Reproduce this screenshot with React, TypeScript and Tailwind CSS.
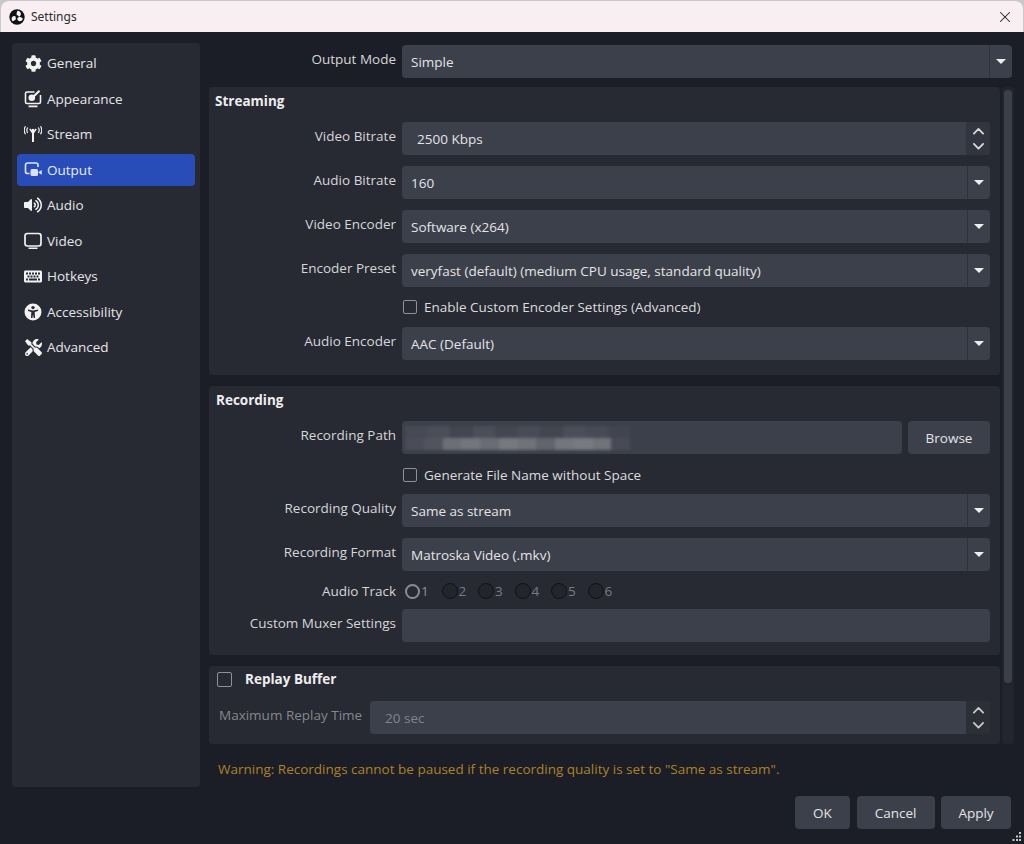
import React from 'react';
import { FaCog, FaKeyboard, FaTools, FaVolumeUp } from 'react-icons/fa';
import { X, ChevronUp, ChevronDown } from 'lucide-react';

const ObsLogo = () => (
  <svg width="16" height="16" viewBox="0 0 16 16">
    <circle cx="8" cy="8" r="7.700" fill="#121212" />
    <g fill="#f5f5f5">
      <path d="M8.600 1.800c2 .2 3.300 1.600 3.300 3.200 0 1.400-1 2.300-2.200 2.500-.3-.8-1-1.300-1.900-1.300-.5-2 .2-3.400.8-4.400Z" />
      <path d="M13.900 10c-.8 1.800-2.600 2.700-4 2.100-1.300-.5-1.800-1.800-1.500-3 .9-.1 1.500-.7 1.800-1.500 1.800.4 3 1.300 3.700 2.400Z" />
      <path d="M3.500 12.300c-1.200-1.600-1.200-3.500-.1-4.500 1-1 2.400-.9 3.400-.1-.4.800-.3 1.600.2 2.300-1.200 1.400-2.400 2-3.500 2.300Z" />
    </g>
  </svg>
);

const AppearanceIcon = () => (
  <svg width="18" height="18" viewBox="0 0 18 18" fill="none" stroke="#f2f2f2" strokeWidth="1.600">
    <path d="M10.500 2H3A1.500 1.500 0 0 0 1.500 3.500v8.500A1.500 1.500 0 0 0 3 13.500h12a1.500 1.500 0 0 0 1.500-1.500V5" />
    <circle cx="7.800" cy="7.800" r="3.300" fill="#f2f2f2" stroke="none" />
    <path d="M9 7 15.500 .8" strokeWidth="2.200" />
    <path d="M4.500 16.300h9" strokeWidth="1.800" />
  </svg>
);

const StreamIcon = () => (
  <svg width="18" height="18" viewBox="0 0 18 18" fill="none" stroke="#f2f2f2" strokeWidth="1.200">
    <circle cx="9" cy="5.500" r="1.700" fill="#f2f2f2" stroke="none" />
    <path d="M9 5.500v11.500" strokeWidth="2" />
    <path d="M5.800 3.800 9 8.500l3.200-4.700" strokeWidth="1.500" />
    <path d="M3.700 2.500a5 5 0 0 0 0 5.500M1.500 1.300a7.500 7.500 0 0 0 0 8M14.300 2.500a5 5 0 0 1 0 5.500M16.500 1.300a7.500 7.500 0 0 1 0 8" />
  </svg>
);

const OutputIcon = () => (
  <svg width="18" height="18" viewBox="0 0 18 18" fill="none">
    <path d="M5.500 12.500H3.500A2 2 0 0 1 1.500 10.500V4A2 2 0 0 1 3.500 2h8.500A2 2 0 0 1 14 4v2" stroke="#dbe2f6" strokeWidth="1.700" />
    <rect x="6.500" y="8" width="7.500" height="7" rx="1.500" fill="#dbe2f6" />
    <path d="M14.500 11 17.800 9v4.800l-3.300-2Z" fill="#dbe2f6" />
  </svg>
);

const VideoIcon = () => (
  <svg width="18" height="18" viewBox="0 0 18 18" fill="none" stroke="#f2f2f2">
    <rect x="1" y="1.500" width="16" height="12.500" rx="2.400" strokeWidth="1.700" />
    <path d="M4.500 16.300h9" strokeWidth="1.500" />
  </svg>
);

const AccessIcon = () => (
  <svg width="18" height="18" viewBox="0 0 18 18">
    <circle cx="9" cy="9" r="8.500" fill="#f2f2f2" />
    <circle cx="9" cy="4.600" r="1.700" fill="#272a33" />
    <path d="M3.800 6.600 9 7.600l5.200-1-.3 1.400-3.200.9.300 6.100H9.600L9 11.600l-.6 3.400H7.000l.3-6.100L4.100 8Z" fill="#272a33" />
  </svg>
);

const navItems = [
  { label: 'General', icon: <FaCog size={17} color="#f2f2f2" /> },
  { label: 'Appearance', icon: <AppearanceIcon /> },
  { label: 'Stream', icon: <StreamIcon /> },
  { label: 'Output', icon: <OutputIcon />, active: true },
  { label: 'Audio', icon: <FaVolumeUp size={18} color="#f2f2f2" /> },
  { label: 'Video', icon: <VideoIcon /> },
  { label: 'Hotkeys', icon: <FaKeyboard size={19} color="#f2f2f2" /> },
  { label: 'Accessibility', icon: <AccessIcon /> },
  { label: 'Advanced', icon: <FaTools size={17} color="#f2f2f2" /> },
];

const Caret = () => (
  <span className="flex h-full w-[23px] shrink-0 items-center justify-center border-l border-[#2f323b]">
    <span className="h-0 w-0 border-x-[5px] border-t-[5px] border-x-transparent border-t-[#eeeeee]" />
  </span>
);

const Combo = ({ value }: { value: string }) => (
  <div className="flex h-[33px] flex-1 items-center justify-between rounded bg-[#3c404b] pl-[9px] text-[#e4e4e6]">
    <span>{value}</span>
    <Caret />
  </div>
);

const Spin = ({ value, disabled }: { value: string; disabled?: boolean }) => (
  <div className={`flex h-[33px] flex-1 items-center justify-between rounded bg-[#3c404b] pl-[15px] ${disabled ? 'text-[#82848b]' : 'text-[#e4e4e6]'}`}>
    <span>{value}</span>
    <span className={`flex h-full w-[24px] flex-col items-center justify-center rounded-r ${disabled ? 'bg-[#2c2f38] text-[#c8c8c8]' : 'bg-[#32353f] text-[#d8d8d8]'}`}>
      <ChevronUp size={19} strokeWidth={2.400} className="-mb-[2px]" />
      <ChevronDown size={19} strokeWidth={2.400} className="-mt-[2px]" />
    </span>
  </div>
);

const Row = ({ label, children }: { label: string; children: React.ReactNode }) => (
  <div className="flex h-[33px] items-center">
    <span className="-mt-[5px] w-[187px] shrink-0 text-right text-[#d6d6d8]">{label}</span>
    <div className="ml-[6px] flex h-full flex-1 items-center">{children}</div>
  </div>
);

const Check = ({ label }: { label: string }) => (
  <div className="flex h-[20px] items-center pl-[193px] text-[#dcdcde]">
    <span className="ml-[1px] h-[14px] w-[14px] rounded-[2px] border border-[#8f9198]" />
    <span className="ml-[7px]">{label}</span>
  </div>
);

const Track = ({ n, on }: { n: number; on?: boolean }) => (
  <span className="flex w-[36.500px] items-center">
    <span className={`rounded-full ${on ? 'h-[15px] w-[15px] border-2 border-[#8a8c92]' : 'h-[16px] w-[16px] border border-[#101218] bg-[#22252c]'}`} />
    <span className={`ml-[1px] ${on ? 'text-[#8f9197]' : 'text-[#797b82]'}`}>{n}</span>
  </span>
);

const blurTop = ['#474a55', '#4b4e59', '#434650', '#4c4f5a', '#444751', '#494c57', '#434650', '#4b4e59', '#484b55', '#424550'];
const blurBottom = ['#4a4d57', '#51535d', '#6d6f78', '#74767e', '#6a6c75', '#777980', '#70727a', '#62646d', '#74767e', '#787a82', '#71737b', '#484b55'];

const BlurStrip = ({ colors }: { colors: string[] }) => (
  <div className="flex h-[12px] w-[225px]">
    {colors.map((c, i) => (
      <span key={i} className="flex-1" style={{ backgroundColor: c }} />
    ))}
  </div>
);

const App = () => (
  <div className="relative h-[844px] w-[1024px] overflow-hidden bg-[#c9c9c9] text-[13.500px] leading-[20px] font-['Open_Sans',sans-serif]">
    <div className="flex h-full flex-col overflow-hidden rounded-t-lg border-t border-[#c8c6c8]">
      <header className="mx-[1px] flex h-[31px] shrink-0 items-center justify-between rounded-t-lg bg-[#f9eff3] pl-[8px] pr-[9px] text-[12px] text-[#2c2c2c]">
        <div className="flex items-center gap-[6px]">
          <ObsLogo />
          <span className="font-['Noto_Sans',sans-serif]">Settings</span>
        </div>
        <X size={18} strokeWidth={1.400} color="#222222" />
      </header>

      <main className="flex flex-1 gap-[9px] bg-[#1b1e26] pl-[12px] pr-[12px] pt-[11px]">
        <nav className="flex h-[744px] w-[188px] shrink-0 flex-col rounded bg-[#272a33] px-[5px] pt-[4px]">
          {navItems.map((item) => (
            <div
              key={item.label}
              className={`flex h-[32px] shrink-0 items-center rounded pl-[7px] ${item.active ? 'bg-[#284cb8] text-[#e8ecf8]' : 'text-[#e6e6e8]'} [&:not(:first-child)]:mt-[3.500px]`}
            >
              <span className="flex w-[18px] justify-center">{item.icon}</span>
              <span className="ml-[5px]">{item.label}</span>
            </div>
          ))}
        </nav>

        <section className="flex min-w-0 flex-1 flex-col">
          <div className="mb-[9px] mt-[2px] flex h-[33px] items-center">
            <span className="-mt-[5px] w-[187px] shrink-0 text-right text-[#d6d6d8]">Output Mode</span>
            <div className="ml-[6px] flex h-full flex-1">
              <Combo value="Simple" />
            </div>
          </div>

          <div className="flex gap-[2px]">
            <div className="flex w-[791px] shrink-0 flex-col gap-[11px]">
              <div className="h-[288px] rounded bg-[#272a33] pr-[10px] pt-[4px]">
                <h2 className="pl-[6px] font-bold text-[#eeeeee]">Streaming</h2>
                <div className="mt-[11px] flex flex-col gap-[11px]">
                  <Row label="Video Bitrate"><Spin value="2500 Kbps" /></Row>
                  <Row label="Audio Bitrate"><Combo value="160" /></Row>
                  <Row label="Video Encoder"><Combo value="Software (x264)" /></Row>
                  <Row label="Encoder Preset"><Combo value="veryfast (default) (medium CPU usage, standard quality)" /></Row>
                </div>
                <div className="mt-[10px]"><Check label="Enable Custom Encoder Settings (Advanced)" /></div>
                <div className="mt-[10px]"><Row label="Audio Encoder"><Combo value="AAC (Default)" /></Row></div>
              </div>

              <div className="h-[269px] rounded bg-[#272a33] pr-[10px] pt-[4px]">
                <h2 className="pl-[7px] font-bold text-[#eeeeee]">Recording</h2>
                <div className="mt-[11px]">
                  <Row label="Recording Path">
                    <div className="flex h-[33px] flex-1 flex-col justify-center overflow-hidden rounded bg-[#3c404b] pl-[3px]">
                      <div className="blur-[1.500px]">
                        <BlurStrip colors={blurTop} />
                        <BlurStrip colors={blurBottom} />
                      </div>
                    </div>
                    <div className="ml-[6px] flex h-[33px] w-[82px] items-center justify-center rounded bg-[#3c404b] text-[#e4e4e6]">Browse</div>
                  </Row>
                </div>
                <div className="mt-[11px]"><Check label="Generate File Name without Space" /></div>
                <div className="mt-[9px] flex flex-col gap-[11px]">
                  <Row label="Recording Quality"><Combo value="Same as stream" /></Row>
                  <Row label="Recording Format"><Combo value="Matroska Video (.mkv)" /></Row>
                </div>
                <div className="mt-[10px] flex h-[20px] items-center">
                  <span className="w-[187px] shrink-0 text-right text-[#d6d6d8]">Audio Track</span>
                  <div className="ml-[9px] flex">
                    <Track n={1} on />
                    {[2, 3, 4, 5, 6].map((n) => <Track key={n} n={n} />)}
                  </div>
                </div>
                <div className="mt-[8px]">
                  <Row label="Custom Muxer Settings"><div className="h-[33px] flex-1 rounded bg-[#3c404b]" /></Row>
                </div>
              </div>

              <div className="h-[78px] rounded bg-[#272a33] pr-[10px] pt-[3px]">
                <div className="flex h-[20px] items-center pl-[8px]">
                  <span className="h-[15px] w-[15px] rounded-[2px] border border-[#8f9198]" />
                  <span className="ml-[13px] font-bold text-[#eeeeee]">Replay Buffer</span>
                </div>
                <div className="mt-[12px] flex h-[33px] items-center pl-[10px]">
                  <span className="-mt-[5px] w-[144px] shrink-0 whitespace-nowrap text-[#85878d]">Maximum Replay Time</span>
                  <div className="ml-[7px] flex h-full flex-1">
                    <Spin value="20 sec" disabled />
                  </div>
                </div>
              </div>
            </div>

            <div className="h-[657px] w-[12px] shrink-0 rounded bg-[#22252d] px-[2px] pt-[3px]">
              <div className="h-[593px] w-[8px] rounded bg-[#3c404b]" />
            </div>
          </div>

          <p className="ml-[9px] mt-[15px] text-[#ad8128]">
            Warning: Recordings cannot be paused if the recording quality is set to "Same as stream".
          </p>

          <div className="mt-[17px] flex justify-end gap-[6.500px] pr-[1px] text-[#e4e4e6]">
            <div className="flex h-[33px] w-[55px] items-center justify-center rounded bg-[#3c404b]">OK</div>
            <div className="flex h-[33px] w-[78px] items-center justify-center rounded bg-[#3c404b]">Cancel</div>
            <div className="flex h-[33px] w-[70px] items-center justify-center rounded bg-[#3c404b]">Apply</div>
          </div>
        </section>
      </main>
    </div>
    <svg className="absolute bottom-[2px] right-[2px]" width="10" height="10" viewBox="0 0 10 10" fill="#c8c8cc">
      <rect x="7" y="0" width="2" height="2" />
      <rect x="4" y="3.500" width="2" height="2" />
      <rect x="7" y="3.500" width="2" height="2" />
      <rect x="0.500" y="7" width="2" height="2" />
      <rect x="4" y="7" width="2" height="2" />
      <rect x="7" y="7" width="2" height="2" />
    </svg>
  </div>
);

export default App;
